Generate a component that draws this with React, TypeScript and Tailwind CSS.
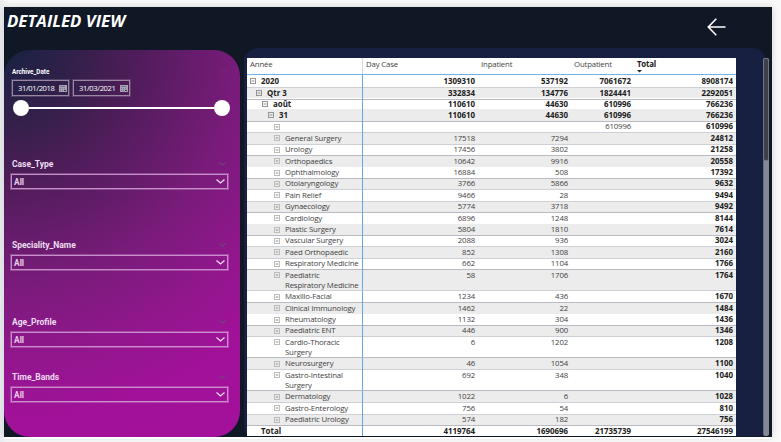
import React from "react";

type Row = {
  label: string[];
  level: number;
  values: string[];
  height: string;
  line?: string;
};

const H11 = "h-[11px]";
const H12 = "h-[12px]";
const H22 = "h-[22px]";
const NONE = "";
const DARK = "border-b border-b-[#b9bac2]";
const LIGHT = "border-b border-b-[#cfd0d6]";

const rows: Row[] = [
  { label: ["2020"], level: 0, values: ["1309310", "537192", "7061672", "8908174"], height: H12, line: LIGHT },
  { label: ["Qtr 3"], level: 1, values: ["332834", "134776", "1824441", "2292051"], height: H11, line: DARK },
  { label: ["août"], level: 2, values: ["110610", "44630", "610996", "766236"], height: H11, line: NONE },
  { label: ["31"], level: 3, values: ["110610", "44630", "610996", "766236"], height: H12, line: DARK },
  { label: [""], level: 4, values: ["", "", "610996", "610996"], height: H11, line: LIGHT },
  { label: ["General Surgery"], level: 4, values: ["17518", "7294", "", "24812"], height: H12, line: LIGHT },
  { label: ["Urology"], level: 4, values: ["17456", "3802", "", "21258"], height: H11, line: DARK },
  { label: ["Orthopaedics"], level: 4, values: ["10642", "9916", "", "20558"], height: H12, line: NONE },
  { label: ["Ophthalmology"], level: 4, values: ["16884", "508", "", "17392"], height: H11, line: DARK },
  { label: ["Otolaryngology"], level: 4, values: ["3766", "5866", "", "9632"], height: H11, line: LIGHT },
  { label: ["Pain Relief"], level: 4, values: ["9466", "28", "", "9494"], height: H12, line: LIGHT },
  { label: ["Gynaecology"], level: 4, values: ["5774", "3718", "", "9492"], height: H11, line: DARK },
  { label: ["Cardiology"], level: 4, values: ["6896", "1248", "", "8144"], height: H12, line: NONE },
  { label: ["Plastic Surgery"], level: 4, values: ["5804", "1810", "", "7614"], height: H11, line: DARK },
  { label: ["Vascular Surgery"], level: 4, values: ["2088", "936", "", "3024"], height: H11, line: LIGHT },
  { label: ["Paed Orthopaedic"], level: 4, values: ["852", "1308", "", "2160"], height: H12, line: LIGHT },
  { label: ["Respiratory Medicine"], level: 4, values: ["662", "1104", "", "1766"], height: H11, line: DARK },
  { label: ["Paediatric", "Respiratory Medicine"], level: 4, values: ["58", "1706", "", "1764"], height: H22, line: LIGHT },
  { label: ["Maxillo-Facial"], level: 4, values: ["1234", "436", "", "1670"], height: H11, line: DARK },
  { label: ["Clinical Immunology"], level: 4, values: ["1462", "22", "", "1484"], height: H12, line: NONE },
  { label: ["Rheumatology"], level: 4, values: ["1132", "304", "", "1436"], height: H11, line: DARK },
  { label: ["Paediatric ENT"], level: 4, values: ["446", "900", "", "1346"], height: H11, line: LIGHT },
  { label: ["Cardio-Thoracic", "Surgery"], level: 4, values: ["6", "1202", "", "1208"], height: H22, line: DARK },
  { label: ["Neurosurgery"], level: 4, values: ["46", "1054", "", "1100"], height: H11, line: LIGHT },
  { label: ["Gastro-Intestinal", "Surgery"], level: 4, values: ["692", "348", "", "1040"], height: H22, line: DARK },
  { label: ["Dermatology"], level: 4, values: ["1022", "6", "", "1028"], height: H11, line: LIGHT },
  { label: ["Gastro-Enterology"], level: 4, values: ["756", "54", "", "810"], height: H12, line: LIGHT },
  { label: ["Paediatric Urology"], level: 4, values: ["574", "182", "", "756"], height: H11, line: DARK },
  { label: ["Total"], level: -1, values: ["4119764", "1690696", "21735739", "27546199"], height: H12, line: NONE },
];

const indent = ["pl-[3px]", "pl-[9px]", "pl-[15px]", "pl-[21px]", "pl-[27px]"];
const REGULAR = "text-[7.8px] tracking-[-0.16px] text-[#3f3f3f]";
const BOLD = "text-[7.9px] font-bold text-[#202020]";

function Toggle({ open }: { open: boolean }) {
  return (
    <svg className="mt-[3px] h-[6px] w-[6px] shrink-0" viewBox="0 0 6 6" fill="none">
      <rect x="0.5" y="0.5" width="5" height="5" stroke={open ? "#959595" : "#bcbcbc"} />
      <path d={open ? "M1.5 3h3" : "M1.5 3h3M3 2v2"} stroke={open ? "#777" : "#a5a5a5"} strokeWidth="0.8" />
    </svg>
  );
}

function TableRow({ row, striped }: { row: Row; striped: boolean }) {
  const strong = row.level < 4;
  const lift = row.height === H11 && !strong ? "leading-[11px]" : "leading-[12px]";
  const cell = `text-right pr-[1px] ${strong ? BOLD : REGULAR} ${lift}`;
  return (
    <div className={`grid grid-cols-[116px_113px_93px_63px_104px] ${row.height} ${striped ? "bg-[#ececec]" : "bg-white"}`}>
      <div className={`flex border-r border-r-[#5fa9ea] ${row.level < 0 ? "pl-[14px]" : indent[row.level]} ${row.line}`}>
        {row.level >= 0 && <Toggle open={strong} />}
        <div className={`whitespace-nowrap ${row.level < 0 ? "" : "pl-[5px]"} ${strong ? BOLD : REGULAR}`}>
          {row.label.map((l, i) => (
            <div key={i} className={i ? "leading-[8px]" : lift}>{l}</div>
          ))}
        </div>
      </div>
      <div className={`${cell} ${row.line}`}>{row.values[0]}</div>
      <div className={`${cell} ${row.line}`}>{row.values[1]}</div>
      <div className={`${cell} ${row.line}`}>{row.values[2]}</div>
      <div className={`pr-[3px] text-right ${BOLD} ${lift} ${row.line}`}>{row.values[3]}</div>
    </div>
  );
}

function Chevron({ className }: { className: string }) {
  return (
    <svg className={className} viewBox="0 0 9 5" fill="none">
      <path d="M0.5 0.5L4.5 4L8.5 0.5" stroke="currentColor" strokeWidth="1.3" />
    </svg>
  );
}

function Slicer({ title, className }: { title: string; className: string }) {
  return (
    <div className={`${className} w-[217px] shrink-0`}>
      <div className="flex h-[13px] items-center justify-between pr-[2px] pl-[1px]">
        <span className="font-[Roboto] text-[8.5px] leading-[13px] font-bold text-[#efdcf0]">{title}</span>
        <Chevron className="mb-[2px] h-[4px] w-[7px] text-[#6c4a78]" />
      </div>
      <div className="mt-[3px] flex h-[15px] items-center justify-between border border-[#c78fc9] pr-[2px] pl-[2px] shadow-[0_0_0_1px_rgba(220,170,220,0.35)]">
        <span className="pt-px font-[Roboto] text-[8.4px] leading-[12px] font-bold text-[#e8cdea]">All</span>
        <Chevron className="h-[5px] w-[9px] text-[#f0dcf0]" />
      </div>
    </div>
  );
}

function DateBox({ value }: { value: string }) {
  return (
    <div className="flex h-[16px] w-[57px] items-center justify-between border border-[#9a85a3] pr-[1px] pl-[5px] shadow-[0_0_0_1px_rgba(150,125,160,0.35)]">
      <span className="text-[7.6px] leading-[16px] font-medium tracking-[-0.38px] text-white">{value}</span>
      <svg className="h-[7px] w-[8px]" viewBox="0 0 8 7">
        <rect width="8" height="7" fill="#a9a2b4" />
        <path d="M1 1h5v1H1zM1 3h1v1H1zM3 3h1v1H3zM5 3h1v1H5zM1 5h1v1H1zM3 5h1v1H3z" fill="#77728a" />
        <path d="M5 5h2v1H5z" fill="#33344c" />
      </svg>
    </div>
  );
}

export default function App() {
  return (
    <div className="h-[442px] w-[781px] overflow-hidden bg-[linear-gradient(90deg,#e9edf0_0px,#eff1f3_4px,#f9f9f9_10px,#f9f9f9_100%)] pt-[7px] pl-[4px] font-['Open_Sans',sans-serif]">
      <div className="flex h-[430px] w-[768px] flex-col bg-[#101725] shadow-[0_2px_0_#ffffff,0_0_7px_rgba(0,0,0,0.16)]">
        <header className="flex h-[41px] shrink-0 items-start justify-between pr-[46px] pl-[3px]">
          <h1 className="pt-[4px] text-[16.8px] leading-[20px] font-bold whitespace-nowrap text-white italic">DETAILED VIEW</h1>
          <svg className="mt-[11px] h-[18px] w-[19px]" viewBox="0 0 19 18" fill="none">
            <path d="M9.3 0.7L1.3 9L9.3 17.2M1.3 9H18.5" stroke="white" strokeWidth="1.6" />
          </svg>
        </header>
        <main className="flex h-[389px]">
          <aside className="mt-[2px] flex h-[387px] w-[236px] shrink-0 flex-col rounded-[26px] bg-[radial-gradient(circle_at_0_0,#182242_0%,#35204b_17%,#4b1d57_27%,#7a1b7b_52%,#93168e_69%,#a11199_82%,#a4109b_100%)] pl-[7px]">
            <div className="mt-[17px] flex h-[10px] shrink-0 items-center justify-between pr-[13px] pl-px">
              <span className="font-[Roboto] text-[6.3px] leading-[10px] font-bold text-white">Archive_Date</span>
              <Chevron className="mb-[2px] h-[3px] w-[6px] text-[#6a3d72]" />
            </div>
            <div className="mt-[3px] flex gap-[4px] pl-[1px]">
              <DateBox value="31/01/2018" />
              <DateBox value="31/03/2021" />
            </div>
            <div className="mt-[4px] flex h-[16px] shrink-0 items-center pl-[2px]">
              <div className="h-[16px] w-[16px] rounded-full bg-white" />
              <div className="h-[2px] w-[185px] bg-white" />
              <div className="h-[16px] w-[16px] rounded-full bg-white" />
            </div>
            <Slicer title="Case_Type" className="mt-[42px]" />
            <Slicer title="Speciality_Name" className="mt-[50px]" />
            <Slicer title="Age_Profile" className="mt-[46px]" />
            <Slicer title="Time_Bands" className="mt-[24px]" />
          </aside>
          <section className="ml-[4px] flex h-[388px] w-[522px] rounded-t-[14px] rounded-b-[8px] bg-[#182041] pl-[3px]">
            <div className="mt-[10px] h-[378px] w-[489px] shrink-0 overflow-hidden bg-white">
              <div className="grid h-[17px] grid-cols-[116px_116px_93px_63px_101px] border-b border-[#72b2ea] text-[7.8px] leading-[13px] tracking-[-0.16px] text-[#444]">
                <div className="border-r border-[#d6d9e0] pl-[3px]">Année</div>
                <div className="pl-[3px]">Day Case</div>
                <div className="pl-[2px]">Inpatient</div>
                <div className="pl-[2px]">Outpatient</div>
                <div className="pl-[2px]">
                  <div className="text-[7.9px] leading-[12px] font-bold tracking-[-0.2px] text-[#202020]">Total</div>
                  <svg className="h-[3px] w-[5px]" viewBox="0 0 5 3"><path d="M0 0h5L2.5 2.6z" fill="#222" /></svg>
                </div>
              </div>
              {rows.map((row, i) => (
                <TableRow key={i} row={row} striped={i % 2 === 1} />
              ))}
            </div>
            <div className="mt-[10px] ml-[27px] h-[378px] w-[6px] shrink-0 rounded-[2px] border-l border-[#666b80] bg-[#858896]">
              <div className="-ml-px h-[103px] rounded-[2px] border border-[#74767f] bg-[#3d3f4b]" />
            </div>
          </section>
        </main>
      </div>
    </div>
  );
}
